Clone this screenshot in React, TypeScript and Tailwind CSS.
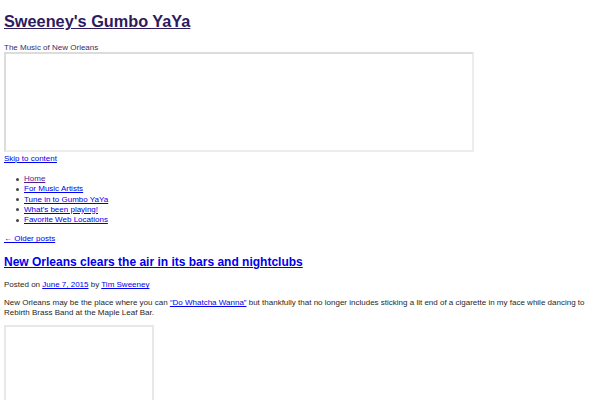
const navItems = [
  { label: 'Home', visited: true },
  { label: 'For Music Artists' },
  { label: 'Tune in to Gumbo YaYa' },
  { label: "What's been playing!" },
  { label: 'Favorite Web Locations' },
];

export default function App() {
  return (
    <div className="min-h-[400px] bg-white px-1 pt-[11px] font-['Liberation_Sans',Arial,sans-serif] text-[8px] leading-[10.25px] text-[#1f1f1f]">
      {/* Site header */}
      <h1 className="text-[16.3px] font-bold leading-[20px]">
        <a href="#" className="text-[#2d1b5e] underline">Sweeney's Gumbo YaYa</a>
      </h1>
      <p className="mt-[12px] h-[9px] leading-[10px] text-[#3a2d63]">The Music of New Orleans</p>
      <div className="h-[100px] w-[470px] border-2 border-t-[#dcdcdc] border-l-[#dcdcdc] border-r-[#ececec] border-b-[#ececec]" />

      <a href="#" className="mt-[2px] block h-[10px] leading-[10px] text-[#0000ee] underline">Skip to content</a>

      <ul className="mt-[10px]">
        {navItems.map((item) => (
          <li key={item.label} className="flex items-center pl-[12px]">
            <span className="mr-[5px] h-[3px] w-[3px] shrink-0 rounded-full bg-[#444]" />
            <a href="#" className={`underline ${item.visited ? 'text-[#551a8b]' : 'text-[#0000ee]'}`}>
              {item.label}
            </a>
          </li>
        ))}
      </ul>

      <a href="#" className="mt-[9px] block leading-[10px] text-[#0000ee] underline">&larr; Older posts</a>

      {/* Post */}
      <h2 className="mt-[11px] text-[12px] font-bold leading-[15px]">
        <a href="#" className="text-[#0000ee] underline">New Orleans clears the air in its bars and nightclubs</a>
      </h2>
      <p className="mt-[10px] leading-[10px]">
        Posted on <a href="#" className="text-[#0000ee] underline">June 7, 2015</a> by{' '}
        <a href="#" className="text-[#0000ee] underline">Tim Sweeney</a>
      </p>
      <p className="mt-[8px] leading-[10px]">
        New Orleans may be the place where you can{' '}
        <a href="#" className="text-[#0000ee] underline">&ldquo;Do Whatcha Wanna&rdquo;</a> but thankfully that no longer
        includes sticking a lit end of a cigarette in my face while dancing to Rebirth Brass Band at the Maple Leaf Bar.
      </p>
      <div className="mt-[7px] h-[100px] w-[150px] border-2 border-[#e8e8e8]" />
    </div>
  );
}
